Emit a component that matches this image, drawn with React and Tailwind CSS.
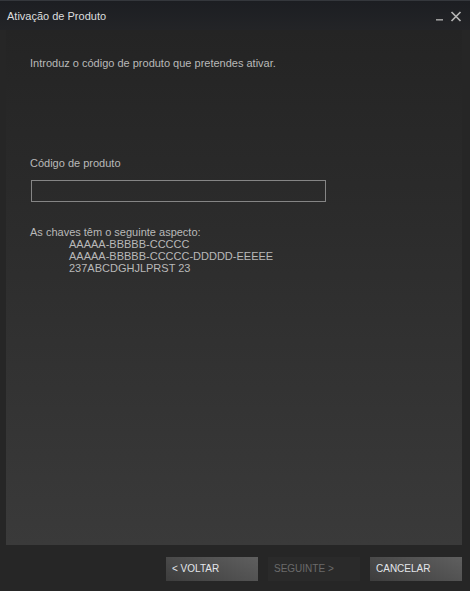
import React from 'react';

const font = { fontFamily: '"Liberation Sans", Arial, sans-serif' };

function TitleBar() {
  return (
    <div className="h-[30px] shrink-0 flex items-center justify-between pl-[7px] pr-[8px] bg-[linear-gradient(to_bottom,#1c1e22,#232427)] border-t border-[#34373c]">
      <span className="text-[11px] leading-[14px] text-[#dcdedf] mt-[1px]">Ativação de Produto</span>
      <div className="flex items-end gap-[6px] mt-[1px]">
        <svg width="9" height="10" viewBox="0 0 9 10" className="mb-[1px]">
          <rect x="1" y="8" width="7" height="1.6" fill="#9a9a9a" />
        </svg>
        <svg width="12" height="11" viewBox="0 0 12 11">
          <path d="M1.5 1 L10.5 10 M10.5 1 L1.5 10" stroke="#b4b4b4" strokeWidth="1.7" />
        </svg>
      </div>
    </div>
  );
}

function Btn({ children, disabled }) {
  return (
    <button
      type="button"
      className={`w-[92px] h-[24px] pl-[6px] text-left text-[10px] leading-[24px] ${
        disabled
          ? 'bg-[#2a2a2a] text-[#6a6a6a]'
          : 'bg-[linear-gradient(205deg,#5f5f5f_0%,#3d3d3d_100%)] text-[#e3e6ea]'
      }`}
    >
      {children}
    </button>
  );
}

export default function App() {
  return (
    <div style={font} className="w-[470px] h-[591px] bg-[#262626] flex flex-col overflow-hidden">
      <TitleBar />
      <div className="flex-1 ml-[6px] mr-[8px] bg-[linear-gradient(to_bottom,#242424_0%,#2a2a2a_30%,#3a3a3a_100%)] pl-[24px] pt-[27px] text-[11px] text-[#b9b9b9]">
        <p className="leading-[13px]">Introduz o código de produto que pretendes ativar.</p>
        <p className="leading-[13px] mt-[87px]">Código de produto</p>
        <input
          type="text"
          className="block mt-[10px] ml-[1px] w-[295px] h-[22px] border border-[#858585] bg-transparent outline-none text-[#dcdcdc] px-1"
        />
        <div className="mt-[24px] leading-[12px]">
          <p>As chaves têm o seguinte aspecto:</p>
          <div className="ml-[39px]">
            <p>AAAAA-BBBBB-CCCCC</p>
            <p>AAAAA-BBBBB-CCCCC-DDDDD-EEEEE</p>
            <p>237ABCDGHJLPRST 23</p>
          </div>
        </div>
      </div>
      <div className="h-[46px] shrink-0 flex justify-end gap-[10px] pt-[12px] pr-[8px]">
        <Btn>&lt; VOLTAR</Btn>
        <Btn disabled>SEGUINTE &gt;</Btn>
        <Btn>CANCELAR</Btn>
      </div>
    </div>
  );
}
